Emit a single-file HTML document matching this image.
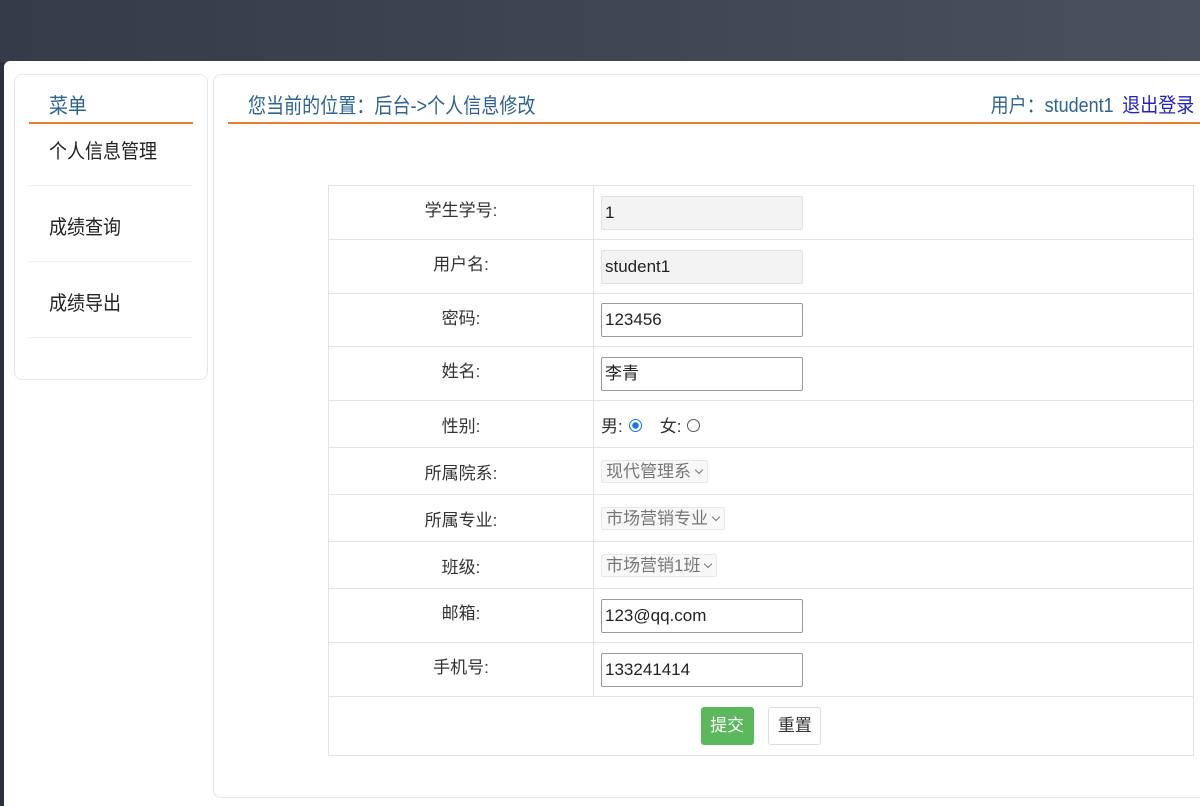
<!DOCTYPE html>
<html><head><meta charset="utf-8">
<style>
*{margin:0;padding:0;box-sizing:border-box}
body{width:1200px;height:800px;overflow:hidden;position:relative;background:#2b303a;font-family:"Liberation Sans","Noto Sans CJK SC",sans-serif;color:#333}
.top{position:absolute;left:0;top:0;width:1200px;height:62px;background:linear-gradient(90deg,#353b48,#3f4553 50%,#4a505e)}
.page{position:absolute;left:4px;top:61px;width:1200px;height:745px;background:#fff;border-radius:6px 0 0 0}
.box{position:absolute;border:1px solid #e6e6e6;border-radius:8px;background:#fff}
.a{position:absolute;white-space:nowrap;transform:scaleX(0.9);transform-origin:left top}
.line{position:absolute;height:2px;background:#ec7a2a}
.hr{position:absolute;height:1px;background:#eee}
table{position:absolute;left:328px;top:185px;width:866px;border-collapse:collapse}
td{border:1px solid #e3e3e3;font-size:17px;color:#333}
td.l{width:265px;text-align:center;vertical-align:middle}
td.r{padding-left:7px}
.in{display:inline-block;width:202px;height:34px;border:1px solid #999;border-radius:2px;font-size:17px;line-height:32px;padding-left:3px;color:#222;vertical-align:middle}
.ro{background:#f3f3f3;border-color:#e2e2e2}
.sel{display:inline-block;height:23px;border:1px solid #e8e8e8;background:#f8f8f8;border-radius:2px;font-size:17px;line-height:21px;padding:0 4px;color:#777}
.sel:after{content:"";display:inline-block;width:5px;height:5px;border-right:1px solid #777;border-bottom:1px solid #777;transform:rotate(45deg);margin:0 1px 4px 5px}
.rad{display:inline-block;width:13px;height:13px;border-radius:50%;border:1px solid #555;vertical-align:middle;margin:-4px 0 0 6px}
.on{border:1px solid #1a73e8;background:radial-gradient(circle,#1a73e8 3px,#fff 3.5px)}
</style></head><body>
<div class="top"></div>
<div class="page"></div>
<div class="box" style="left:14px;top:74px;width:194px;height:306px"></div>
<div class="box" style="left:213px;top:74px;width:1000px;height:724px"></div>
<div class="a" style="left:49px;top:90px;font-size:21px;color:#2f6391">菜单</div>
<div class="line" style="left:29px;top:122px;width:164px"></div>
<div class="a" style="left:49px;top:135px;font-size:20px;color:#222">个人信息管理</div>
<div class="hr" style="left:29px;top:185px;width:164px"></div>
<div class="a" style="left:49px;top:211px;font-size:20px;color:#222">成绩查询</div>
<div class="hr" style="left:29px;top:261px;width:164px"></div>
<div class="a" style="left:49px;top:287px;font-size:20px;color:#222">成绩导出</div>
<div class="hr" style="left:29px;top:337px;width:164px"></div>
<div class="a" style="left:248px;top:90px;font-size:21px;color:#2f6391;transform:scaleX(0.86)">您当前的位置：后台-&gt;个人信息修改</div>
<div class="a" style="right:6px;top:89px;font-size:20px;color:#2f6391;transform-origin:right top">用户：student1 <span style="color:#2121c4;margin-left:4px">退出登录</span></div>
<div class="line" style="left:228px;top:122px;width:972px"></div>
<table>
<tr style="height:54px"><td class="l" style="padding-bottom:8px">学生学号:</td><td class="r"><span class="in ro">1</span></td></tr>
<tr style="height:54px"><td class="l" style="padding-bottom:8px">用户名:</td><td class="r"><span class="in ro">student1</span></td></tr>
<tr style="height:53px"><td class="l" style="padding-bottom:8px">密码:</td><td class="r"><span class="in">123456</span></td></tr>
<tr style="height:54px"><td class="l" style="padding-bottom:8px">姓名:</td><td class="r"><span class="in">李青</span></td></tr>
<tr style="height:47px"><td class="l">性别:</td><td class="r">男:<span class="rad on"></span><span style="margin-left:18px">女:</span><span class="rad"></span></td></tr>
<tr style="height:47px"><td class="l">所属院系:</td><td class="r"><span class="sel">现代管理系</span></td></tr>
<tr style="height:47px"><td class="l">所属专业:</td><td class="r"><span class="sel">市场营销专业</span></td></tr>
<tr style="height:47px"><td class="l">班级:</td><td class="r"><span class="sel">市场营销1班</span></td></tr>
<tr style="height:54px"><td class="l" style="padding-bottom:8px">邮箱:</td><td class="r"><span class="in">123@qq.com</span></td></tr>
<tr style="height:54px"><td class="l" style="padding-bottom:8px">手机号:</td><td class="r"><span class="in">133241414</span></td></tr>
<tr style="height:59px"><td colspan="2" style="text-align:center;padding-right:0">
<span style="display:inline-block;width:53px;height:38px;background:#5cb85c;color:#fff;border-radius:3px;line-height:38px;font-size:17px;vertical-align:middle">提交</span>
<span style="display:inline-block;width:53px;height:38px;background:#fff;border:1px solid #ddd;color:#333;border-radius:3px;line-height:36px;font-size:17px;margin-left:10px;vertical-align:middle">重置</span>
</td></tr>
</table>
</body></html>
